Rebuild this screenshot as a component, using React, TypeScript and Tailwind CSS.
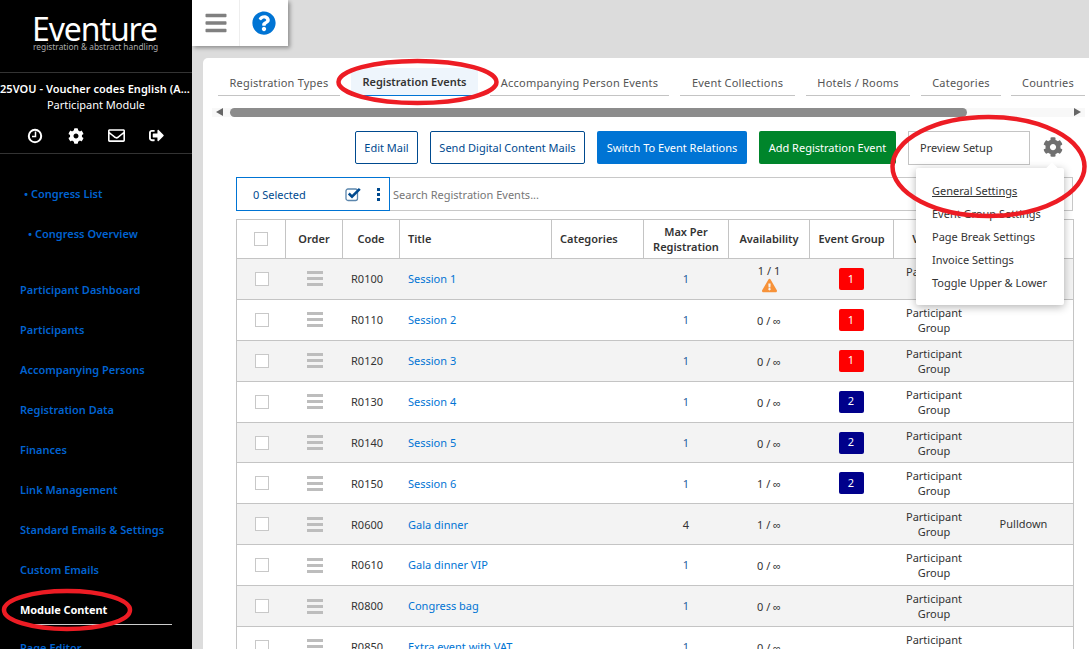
import React from "react";
import { FaBars, FaCog, FaExclamationTriangle, FaQuestionCircle, FaRegEnvelope, FaSignOutAlt } from "react-icons/fa";

const navItems = [
  { label: "Participant Dashboard", top: 282 },
  { label: "Participants", top: 322 },
  { label: "Accompanying Persons", top: 362 },
  { label: "Registration Data", top: 402 },
  { label: "Finances", top: 442 },
  { label: "Link Management", top: 482 },
  { label: "Standard Emails & Settings", top: 522 },
  { label: "Custom Emails", top: 562 },
];

const tabs = [
  { label: "Registration Types", w: "w-[122px]", ml: "ml-0" },
  { label: "Registration Events", w: "w-[127px]", ml: "ml-[11px]", active: true },
  { label: "Accompanying Person Events", w: "w-[179px]", ml: "ml-[12px]" },
  { label: "Event Collections", w: "w-[115px]", ml: "ml-[11px]" },
  { label: "Hotels / Rooms", w: "w-[104px]", ml: "ml-[11px]" },
  { label: "Categories", w: "w-[80px]", ml: "ml-[11px]" },
  { label: "Countries", w: "w-[74px]", ml: "ml-[10px]" },
];

const rows = [
  { code: "R0100", title: "Session 1", max: "1", avail: "1 / 1", warn: true, group: "1", color: "bg-[#ff0000]", vis: "Participant Group" },
  { code: "R0110", title: "Session 2", max: "1", avail: "0 / ∞", group: "1", color: "bg-[#ff0000]", vis: "Participant Group" },
  { code: "R0120", title: "Session 3", max: "1", avail: "0 / ∞", group: "1", color: "bg-[#ff0000]", vis: "Participant Group" },
  { code: "R0130", title: "Session 4", max: "1", avail: "0 / ∞", group: "2", color: "bg-[#00008b]", vis: "Participant Group" },
  { code: "R0140", title: "Session 5", max: "1", avail: "0 / ∞", group: "2", color: "bg-[#00008b]", vis: "Participant Group" },
  { code: "R0150", title: "Session 6", max: "1", avail: "1 / ∞", group: "2", color: "bg-[#00008b]", vis: "Participant Group" },
  { code: "R0600", title: "Gala dinner", max: "4", plainMax: true, avail: "1 / ∞", vis: "Participant Group", type: "Pulldown" },
  { code: "R0610", title: "Gala dinner VIP", max: "1", avail: "0 / ∞", vis: "Participant Group" },
  { code: "R0800", title: "Congress bag", max: "1", avail: "0 / ∞", vis: "Participant Group" },
  { code: "R0850", title: "Extra event with VAT", max: "1", avail: "0 / ∞", vis: "Participant Group" },
];

const grid = "grid grid-cols-[49px_57px_57px_152px_92px_85px_81px_84px_82px_98px]";
const cell = "flex items-center justify-center text-center";

export default function App() {
  return (
    <div className="relative h-[649px] w-[1089px] overflow-hidden bg-[#dcdcdc] font-['Open_Sans',sans-serif] text-[11px] text-[#333]">
      {/* SIDEBAR */}
      <aside className="absolute left-0 top-0 h-full w-[192px] bg-black text-white">
        <div className="absolute left-[32px] top-[9px] font-['Roboto',sans-serif] text-[32px] leading-[40px] tracking-[-1.1px] text-white">Eventure</div>
        <div className="absolute left-[33px] top-[41px] whitespace-nowrap font-['Roboto',sans-serif] text-[8.4px] leading-[12px] text-[#aaa]">registration &amp; abstract handling</div>
        <div className="absolute left-0 top-[72px] h-px w-full bg-[#333]" />
        <div className="absolute left-0 top-[81px] w-[192px] whitespace-nowrap text-[11px] font-semibold leading-[15px] tracking-[0.05px]">25VOU - Voucher codes English (A...</div>
        <div className="absolute left-0 top-[97px] w-full text-center leading-[15px]">Participant Module</div>
        <div className="absolute left-0 top-[128px] w-full">
          <svg className="absolute left-[27px] top-[0px]" width="16" height="16" viewBox="0 0 16 16" fill="none" stroke="white" strokeWidth="2">
            <circle cx="8" cy="8" r="6.2" />
            <path d="M8.5 3.5V8.5H5" strokeWidth="1.5" />
          </svg>
          <FaCog className="absolute left-[68px] top-[0px] text-[16px]" />
          <FaRegEnvelope className="absolute left-[108px] top-[-1px] text-[17px]" />
          <FaSignOutAlt className="absolute left-[149px] top-[0px] text-[15px]" />
        </div>
        <div className="absolute left-0 top-[153px] h-px w-full bg-[#333]" />

        <div className="absolute left-[24px] top-[186px] font-semibold leading-[15px] text-[#0063d1]">• Congress List</div>
        <div className="absolute left-[28px] top-[226px] font-semibold leading-[15px] text-[#0063d1]">• Congress Overview</div>
        {navItems.map((item) => (
          <div key={item.label} className="absolute left-[20px] font-semibold leading-[15px] text-[#0063d1]" style={{ top: item.top }}>
            {item.label}
          </div>
        ))}
        <div className="absolute left-[20px] top-[602px] font-bold leading-[15px] tracking-[-0.08px] text-white">Module Content</div>
        <div className="absolute left-[20px] top-[624px] h-px w-[152px] bg-[#ccc]" />
        <div className="absolute left-[20px] top-[640px] font-semibold leading-[15px] text-[#0063d1]">Page Editor</div>
      </aside>

      {/* TOP BUTTONS */}
      <div className="absolute left-[192px] top-0 flex h-[46px] w-[96px] bg-white shadow-[2px_2px_4px_rgba(0,0,0,0.35)]">
        <div className="flex w-[48px] items-center justify-center border-r border-[#eee]">
          <FaBars className="text-[24px] text-[#808080]" />
        </div>
        <div className="flex w-[48px] items-center justify-center">
          <FaQuestionCircle className="text-[24px] text-[#0074d4]" />
        </div>
      </div>

      {/* PANEL */}
      <main className="absolute left-[203px] top-[58px] h-[600px] w-[900px] rounded-tl-[5px] bg-white">
        <div className="absolute left-[15px] top-[10px] flex">
          {tabs.map((tab) => (
            <div
              key={tab.label}
              className={`flex h-[28px] items-center justify-center whitespace-nowrap border-b ${tab.w} ${tab.ml} ${
                tab.active
                  ? "border-[#0074d4] bg-[#eef5fc] pt-[1px] font-semibold text-[#333]"
                  : "border-[#c4c4c4] pt-[3px] tracking-[0.2px] text-[#555]"
              }`}
            >
              {tab.label}
            </div>
          ))}
        </div>

        {/* SCROLLBAR */}
        <div className="absolute left-[9px] top-[50px] h-[9px] w-[873px] bg-[#f8f8f8]" />
        <div className="absolute left-[27px] top-[50px] h-[9px] w-[737px] rounded-full bg-[#8c8c8c]" />
        <div className="absolute left-[13px] top-[50px] h-0 w-0 border-y-[4px] border-r-[7px] border-y-transparent border-r-[#666]" />
        <div className="absolute left-[871px] top-[50px] h-0 w-0 border-y-[4px] border-l-[7px] border-y-transparent border-l-[#666]" />

        {/* ACTIONS */}
        <button className="absolute left-[152px] top-[73px] h-[33px] w-[63px] rounded-[2px] border border-[#004a8f] pt-[2px] text-[#004a8f]">Edit Mail</button>
        <button className="absolute left-[227px] top-[73px] h-[33px] w-[155px] rounded-[2px] border border-[#004a8f] pt-[2px] text-[#004a8f]">Send Digital Content Mails</button>
        <button className="absolute left-[394px] top-[73px] h-[33px] w-[150px] rounded-[2px] bg-[#0074d4] pt-[2px] text-white">Switch To Event Relations</button>
        <button className="absolute left-[556px] top-[73px] h-[33px] w-[137px] rounded-[2px] bg-[#00852b] pt-[2px] text-white">Add Registration Event</button>
        <div className="absolute left-[705px] top-[73px] flex h-[34px] w-[122px] items-center border border-[#c4c4c4] pl-[11px] text-[#333]">Preview Setup</div>
        <FaCog className="absolute left-[840px] top-[79px] text-[20px] text-[#707070]" />

        {/* SEARCH ROW */}
        <div className="absolute left-[33px] top-[119px] flex h-[34px] w-[837px] border border-[#c8c8c8]">
          <div className="-ml-px -mt-px flex h-[34px] w-[154px] shrink-0 items-center border border-[#0074d4] pl-[16px] pt-[2px] text-[#004a8f]">
            0 Selected
            <svg className="absolute left-[108px] top-[9px]" width="17" height="15" viewBox="0 0 17 15" fill="none">
              <rect x="1" y="2" width="11.5" height="11.5" rx="2" stroke="#5b86ad" strokeWidth="1.3" />
              <path d="M3.8 6.5L7 9.6L14.8 1.8" stroke="#004a8f" strokeWidth="2.6" />
            </svg>
            <span className="absolute left-[140px] top-[10px] flex flex-col gap-[2px]">
              <span className="h-[3px] w-[3px] bg-[#004a8f]" />
              <span className="h-[3px] w-[3px] bg-[#004a8f]" />
              <span className="h-[3px] w-[3px] bg-[#004a8f]" />
            </span>
          </div>
          <div className="flex items-center pl-[3px] pt-[2px] text-[#777]">Search Registration Events...</div>
        </div>

        {/* TABLE */}
        <div className="absolute left-[33px] top-[161px] w-[838px] border-x border-t border-[#c4c4c4]">
          <div className={`${grid} h-[39px] border-b border-[#c4c4c4] font-semibold text-[#333]`}>
            <div className={`${cell} border-r border-[#c4c4c4]`}>
              <span className="h-[14px] w-[14px] border border-[#c8c8c8] bg-white" />
            </div>
            <div className={`${cell} border-r border-[#c4c4c4]`}>Order</div>
            <div className={`${cell} border-r border-[#c4c4c4]`}>Code</div>
            <div className="flex items-center border-r border-[#c4c4c4] pl-[8px]">Title</div>
            <div className="flex items-center border-r border-[#c4c4c4] pl-[8px]">Categories</div>
            <div className={`${cell} border-r border-[#c4c4c4] leading-[15px]`}>Max Per<br />Registration</div>
            <div className={`${cell} border-r border-[#c4c4c4]`}>Availability</div>
            <div className={`${cell} border-r border-[#c4c4c4]`}>Event Group</div>
            <div className={cell}>Visibility</div>
            <div className={cell}>Type</div>
          </div>
          {rows.map((row, i) => (
            <div key={row.code} className={`${grid} h-[40.9px] border-b border-[#c4c4c4] ${i % 2 === 0 ? "bg-[#f3f3f3]" : "bg-white"}`}>
              <div className={cell}>
                <span className="h-[14px] w-[14px] border border-[#c8c8c8] bg-white" />
              </div>
              <div className={`${cell} flex-col gap-[3px]`}>
                <span className="h-[3px] w-[16px] bg-[#bdbdbd]" />
                <span className="h-[3px] w-[16px] bg-[#bdbdbd]" />
                <span className="h-[3px] w-[16px] bg-[#bdbdbd]" />
              </div>
              <div className="flex items-center pl-[8px] pt-[1px]">{row.code}</div>
              <div className="flex items-center pl-[8px] pt-[1px] text-[#0074d4]">{row.title}</div>
              <div />
              <div className={`${cell} pr-[1px] pt-[1px] ${row.plainMax ? "text-[#333]" : "text-[#1f5f9e]"}`}>{row.max}</div>
              <div className={`${cell} flex-col pr-[1px] leading-[13px] ${row.warn ? "pb-[1px]" : "pt-[1px]"}`}>
                {row.avail}
                {row.warn && <FaExclamationTriangle className="mt-[1px] text-[15px] text-[#f79239]" />}
              </div>
              <div className={`${cell} pr-[2px]`}>
                {row.group && (
                  <span className={`flex h-[22px] w-[25px] items-center justify-center rounded-[2px] text-white ${row.color}`}>{row.group}</span>
                )}
              </div>
              <div className={`${cell} pl-[10px] pr-[12px] leading-[15px]`}>{row.vis}</div>
              <div className={`${cell} pr-[3px]`}>{row.type}</div>
            </div>
          ))}
        </div>

        {/* SETTINGS MENU */}
        <div className="absolute left-[713px] top-[110px] h-[137px] w-[148px] rounded-[2px] bg-white shadow-[0_2px_8px_rgba(0,0,0,0.3)]">
          <div className="absolute left-[132px] top-[-4px] h-[8px] w-[8px] rotate-45 bg-white" />
          <div className="absolute left-[16px] top-[15px] leading-[15px] underline">General Settings</div>
          <div className="absolute left-[16px] top-[38px] leading-[15px]">Event Group Settings</div>
          <div className="absolute left-[16px] top-[61px] leading-[15px]">Page Break Settings</div>
          <div className="absolute left-[16px] top-[84px] leading-[15px]">Invoice Settings</div>
          <div className="absolute left-[16px] top-[107px] leading-[15px]">Toggle Upper &amp; Lower</div>
        </div>
      </main>

      {/* RED ANNOTATIONS */}
      <svg className="pointer-events-none absolute left-0 top-0" width="1089" height="649" fill="none" stroke="#ed1c24" strokeWidth="4.5">
        <ellipse cx="417.5" cy="82" rx="79" ry="21" />
        <ellipse cx="988.5" cy="166.5" rx="96" ry="49.5" />
        <ellipse cx="67" cy="610" rx="63" ry="19" />
      </svg>
    </div>
  );
}
